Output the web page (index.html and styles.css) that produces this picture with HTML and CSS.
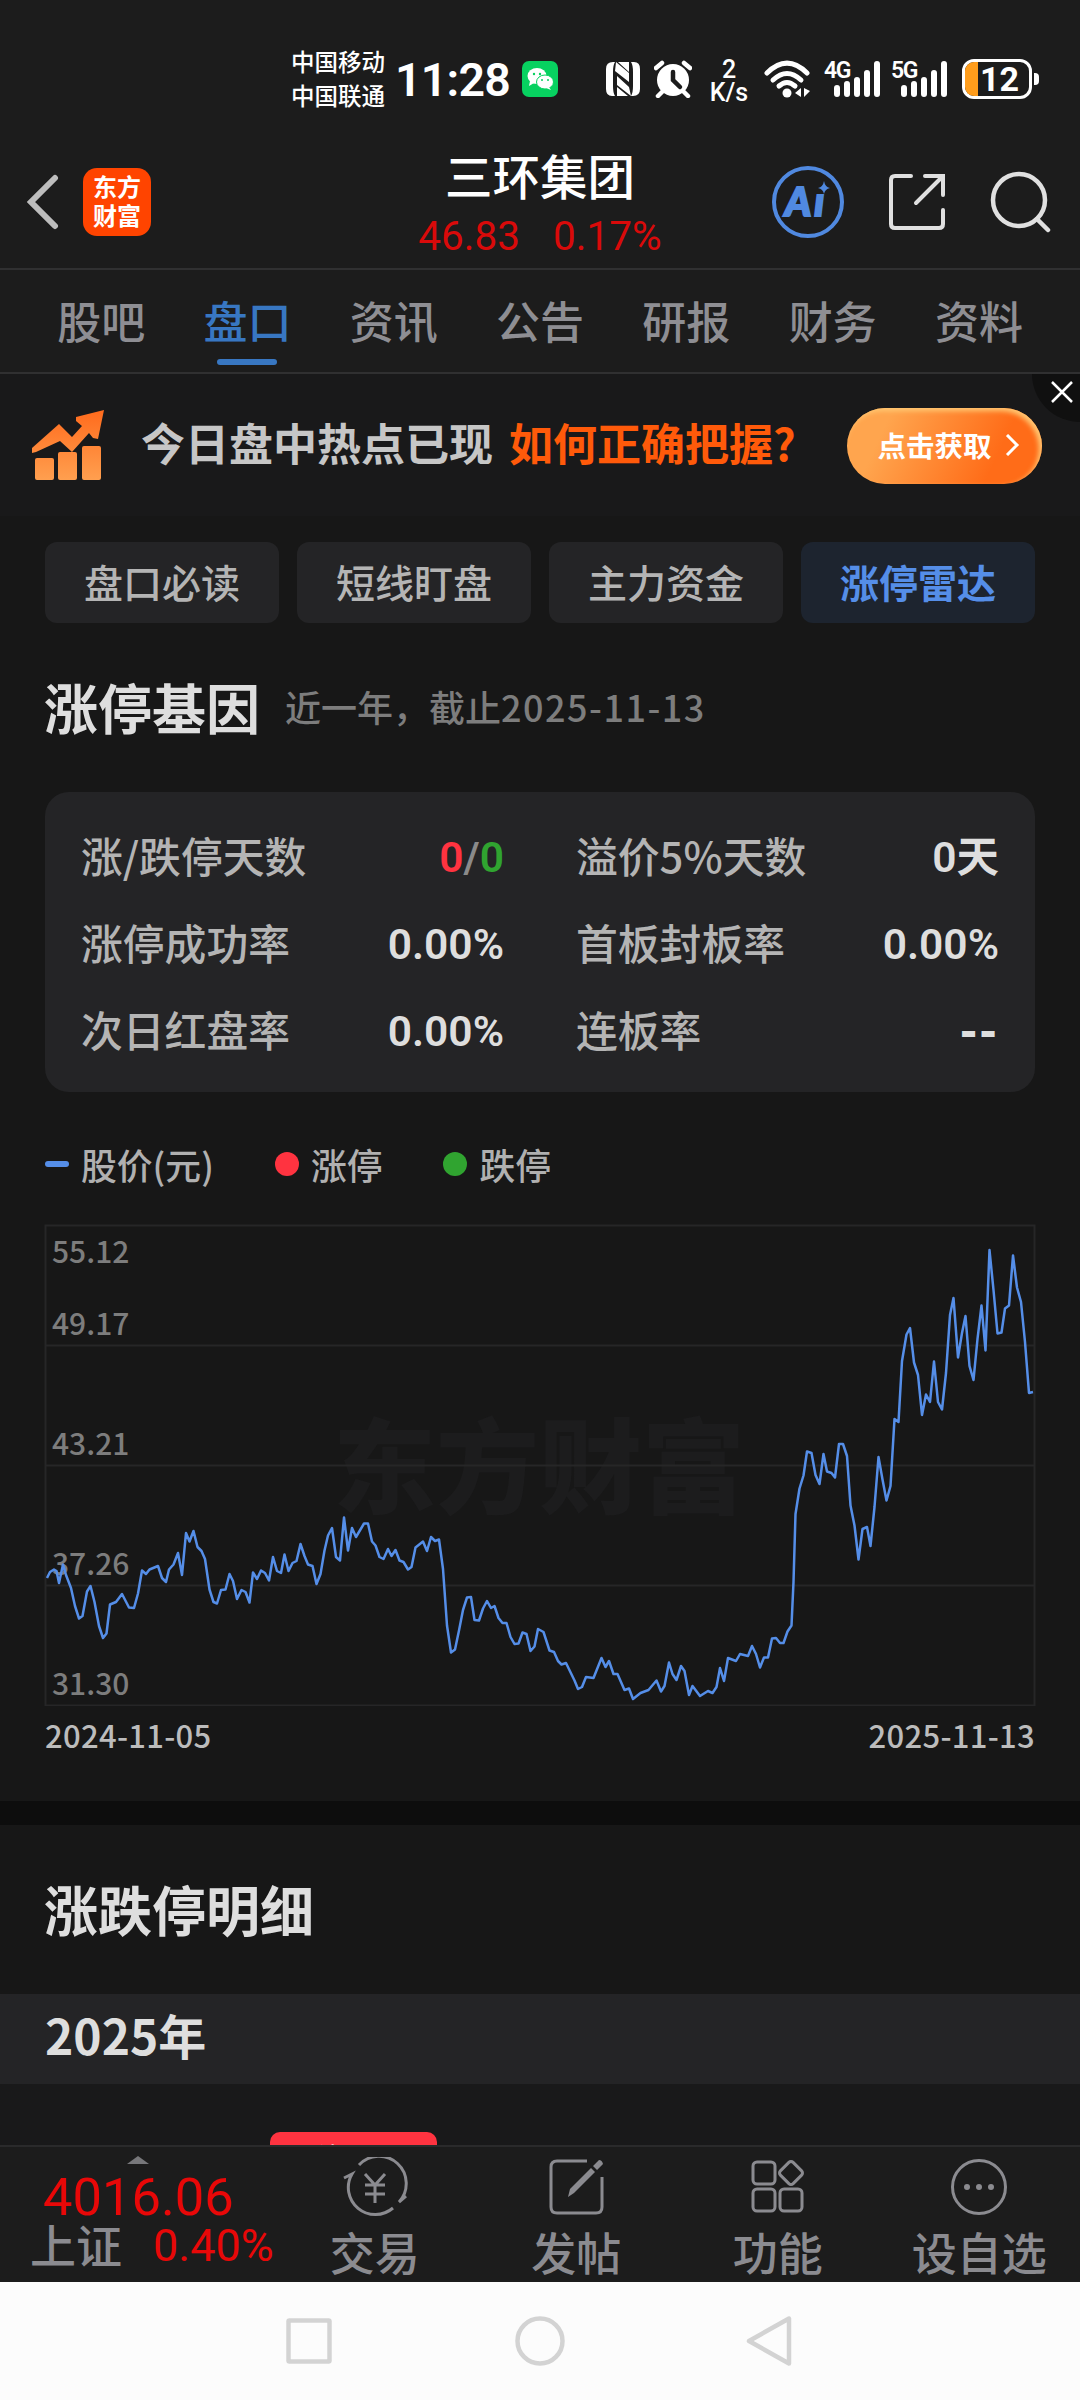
FILE: index.html
```html
<!DOCTYPE html>
<html lang="zh-CN">
<head>
    <meta charset="UTF-8">
    <title>三环集团</title>
    <link rel="stylesheet" href="styles.css">
</head>
<body>
<div class="status">
    <div class="carriers"><span>中国移动</span><span>中国联通</span></div>
    <div class="time">11:28</div>
    <svg class="wechat" width="36" height="36" viewBox="0 0 36 36">
        <rect width="36" height="36" rx="7" fill="#07d160"/>
        <ellipse cx="15" cy="15" rx="9.5" ry="8" fill="#fff"/>
        <path d="M8 20l-1 5 5-3z" fill="#fff"/>
        <ellipse cx="23" cy="21" rx="8.5" ry="7" fill="#fff" stroke="#07d160"/>
        <path d="M27 26l2 3-5-2z" fill="#fff"/>
        <g fill="#07d160"><circle cx="12" cy="13" r="1.2"/><circle cx="18" cy="13" r="1.2"/><circle cx="20" cy="19" r="1"/><circle cx="26" cy="19" r="1"/></g>
    </svg>
    <svg class="nfc" width="34" height="34" viewBox="0 0 34 34">
        <path d="M7 0H9Q7 3 7 10V24Q7 31 9 34H6Q0 34 0 27V7Q0 0 7 0ZM27 34H25Q27 31 27 24V10Q27 3 25 0H28Q34 0 34 7V27Q34 34 27 34Z" fill="#fff"/>
        <path d="M10 0L23 11V20L9 9ZM11 14L23 25L25 34L11 23ZM11 25L22 34H11ZM12 0H23V10Z" fill="#fff"/>
    </svg>
    <svg class="alarm" width="38" height="38" viewBox="0 0 38 38">
        <circle cx="19" cy="20" r="16" fill="#fff"/>
        <path d="M2 8L8 3M36 8L30 3M8 32l-4 4M30 32l4 4" stroke="#fff" stroke-width="4.5" fill="none" stroke-linecap="round"/>
        <path d="M19 12V20L26 27" stroke="#1c1c1c" stroke-width="4.5" fill="none" stroke-linecap="round"/>
    </svg>
    <div class="speed"><span>2</span><span>K/s</span></div>
    <svg class="wifi" width="48" height="38" viewBox="0 0 48 38">
        <g fill="none" stroke="#fff" stroke-width="5" stroke-linecap="round"><path d="M3 13Q23 -7 43 13"/><path d="M9 20Q23 7 37 20"/><path d="M15 26Q23 19 31 26"/></g>
        <circle cx="23" cy="33" r="4.5" fill="#fff"/>
        <path d="M31 33l6-5v9zM40 28v9l6-6z" fill="#fff"/>
    </svg>
    <div class="signal"><span>4G</span>
        <svg width="46" height="38" viewBox="0 0 46 38"><path d="M3 28V34M13 24V34M23 20V34M33 13V34M43 4V34" stroke="#fff" stroke-width="6" stroke-linecap="round"/></svg>
    </div>
    <div class="signal"><span>5G</span>
        <svg width="46" height="38" viewBox="0 0 46 38"><path d="M3 28V34M13 24V34M23 20V34M33 13V34M43 4V34" stroke="#fff" stroke-width="6" stroke-linecap="round"/></svg>
    </div>
    <div class="battery"><i></i><b>12</b></div>
    <div class="nub"></div>
</div>

<div class="header">
    <div class="header-left">
        <svg width="34" height="56" viewBox="0 0 34 56"><path d="M29 4L5 28L29 52" fill="none" stroke="#bdbdbd" stroke-width="6" stroke-linecap="round"/></svg>
        <div class="logo">东方<br>财富</div>
    </div>
    <div class="stock">
        <div class="stock-name">三环集团</div>
        <div class="stock-price"><span>46.83</span><span>0.17%</span></div>
    </div>
    <div class="header-right">
        <div class="ai">
            <svg width="72" height="72" viewBox="0 0 72 72"><circle cx="36" cy="36" r="34" fill="none" stroke="#5089e0" stroke-width="4"/><path d="M52 15q1 6 6 7q-5 1-6 6q-1-5-6-6q5-1 6-7z" fill="#5089e0"/></svg>
            <span>Aı</span>
        </div>
        <svg width="60" height="60" viewBox="0 0 60 60"><path d="M24 4H8Q4 4 4 8V52Q4 56 8 56H52Q56 56 56 52V38M38 4H56V23M55 5L29 31" fill="none" stroke="#e0e0e0" stroke-width="4" stroke-linecap="round"/></svg>
        <svg width="62" height="62" viewBox="0 0 62 62"><circle cx="29" cy="29" r="26" fill="none" stroke="#e0e0e0" stroke-width="4.5"/><path d="M47 48L58 59" stroke="#e0e0e0" stroke-width="4.5" stroke-linecap="round"/></svg>
    </div>
</div>

<div class="tabs">
    <span>股吧</span><span class="on">盘口</span><span>资讯</span><span>公告</span><span>研报</span><span>财务</span><span>资料</span>
</div>

<div class="banner">
    <svg width="74" height="72" viewBox="0 0 74 72">
        <defs><linearGradient id="g" gradientUnits="userSpaceOnUse" x1="0" y1="0" x2="0" y2="72"><stop offset="0" stop-color="#ff6a1c"/><stop offset="1" stop-color="#ffa050"/></linearGradient></defs>
        <path d="M1 39L28 15L41 28L51 17L45 12V8L73 1L67 30L62 29L58 24L41 43L29 32L5 43L1 44Z" fill="url(#g)"/>
        <path d="M4 51q0-2 2-2h15q2 0 2 2v18q0 2-2 2H6q-2 0-2-2zM27 45q0-2 2-2h15q2 0 2 2v24q0 2-2 2H29q-2 0-2-2zM51 39q0-2 2-2h15q2 0 2 2v30q0 2-2 2H53q-2 0-2-2z" fill="url(#g)"/>
    </svg>
    <p>今日盘中热点已现<em>如何正确把握?</em></p>
    <div class="get">点击获取<svg width="16" height="22" viewBox="0 0 16 22"><path d="M3 1L13 11L3 21" fill="none" stroke="#fff" stroke-width="3"/></svg></div>
    <div class="close"><svg width="22" height="22" viewBox="0 0 22 22"><path d="M1 1L21 21M21 1L1 21" stroke="#fff" stroke-width="2.5"/></svg></div>
</div>

<div class="pills">
    <span>盘口必读</span><span>短线盯盘</span><span>主力资金</span><span class="on">涨停雷达</span>
</div>

<div class="title"><h2>涨停基因</h2><small>近一年，截止<span>2025-11-13</span></small></div>

<div class="card">
    <div><span>涨/跌停天数</span><b><i class="red">0</i><i class="gray">/</i><i class="green">0</i></b></div>
    <div><span>溢价5%天数</span><b>0天</b></div>
    <div><span>涨停成功率</span><b>0.00%</b></div>
    <div><span>首板封板率</span><b>0.00%</b></div>
    <div><span>次日红盘率</span><b>0.00%</b></div>
    <div><span>连板率</span><b class="none">--</b></div>
</div>

<div class="legend">
    <span><i class="dash"></i>股价(元)</span>
    <span><i class="dot up"></i>涨停</span>
    <span><i class="dot down"></i>跌停</span>
</div>

<svg class="chart" width="992" height="482" viewBox="-1 -1 992 482">
    <text class="mark" x="288" y="281">东方财富</text>
    <path d="M0.5 0.5H989.5V480.5H0.5ZM0 120.5H990M0 240.5H990M0 360.5H990" fill="none" stroke="#262627" stroke-width="2"/>
    <g class="axis">
        <text x="7" y="38">55.12</text>
        <text x="7" y="110">49.17</text>
        <text x="7" y="230">43.21</text>
        <text x="7" y="350">37.26</text>
        <text x="7" y="470">31.30</text>
    </g>
    <polyline class="price" points="2,353 5,347 9,344.5 11.5,346 14,358 18,339.5 21,350 26,363 30,381 34,393.5 37.5,391 42,366.5 45.5,361 49.5,377 54,401 58,413 61.5,408.5 65,379.5 71,377 77,369 84,382.5 89,383 93,368.5 97,345.5 101,349 104.5,344.5 113,341 117,353 121,357 124,344.5 128.5,339.5 133,328 137,350 141,308 144.5,316.5 148.5,306 152.5,322 156.5,326 160,334 164.5,364.5 168.5,377 172,378.5 176,365 180.5,364.5 184.5,349 188,356 192,374 196.5,365 200.5,367 204.5,377.5 208,347.5 212,354 216,345.5 220,348 224,355.5 228,332 232,346 236,348 239.5,329.5 243.5,346 247.5,338 251.5,336 255.5,319 259.5,331 263,339.5 267.5,341 271.5,359 275.5,349 279.5,325.5 283,310.5 287,303 291,332 295,335.5 299,292.5 303,325.5 307,303 311,312 319,298.5 323,298.5 327,316.5 330.5,320.5 334.5,332 338.5,334 343,324 346.5,331 350.5,325 354.5,335.5 358.5,337 363,344.5 366.5,342 370.5,322.5 378,316.5 382,326 386,312 390,316 394,314.5 398,344 402,400.5 406,427.5 410,424.5 414,405.5 418,385 422,372.5 426,372 429.5,395 434,395.5 438,383.5 442,376 446,383 449.5,381 453.5,393 457.5,398 461.5,398 465.5,412 469.5,419 473.5,418.5 477.5,407.5 481.5,409 485.5,426 489.5,421.5 493,404 498.5,407 504.5,425.5 509,427 513,436 516.5,439.5 521,438 529.5,455.5 533,464 537,462 541,452 548.5,453 556.5,433 560.5,442 564,436 568.5,449 572.5,449 579.5,465 584,463.5 588,474 595.5,468 603.5,465 611.5,455.5 616,466.5 619.5,461 624,437.5 627.5,449 631.5,455 636,441 639.5,446 644,470 647.5,461 655,471 663,466 667.5,468 671.5,462 675,443 679,456 683,433 691,436 695,429 703,431 707,421 711,429 715,442.5 719,432.5 723,432.5 727,413.5 731,413 735,418 738.5,418 742.5,406.5 746.5,400.5 748.5,357 750.5,289 754.5,263.5 758.5,250.5 762,226.5 766.5,228 770.5,250 774.5,259 778.5,229 782,246.5 786.5,248 790,252.5 794,219 798,219 802,231 805.5,280.5 809.5,300.5 813.5,334.5 817.5,304 822,302 825.5,321 829.5,282 833.5,232 837.5,254.5 841.5,275.5 845.5,261 849.5,194 853.5,197 857,136 861.5,109.5 865,103 869,137.5 873,150 877,190 881,169.5 885,177 889,136.5 893,177 897,184.5 901,148 905,90 908.5,73 913,132.5 917,108 920.5,91 924.5,141 928.5,155 932.5,114 936.5,80.5 940.5,125.5 944.5,25 948.5,65 952.5,108.5 956.5,107.5 960,83.5 964,80.5 968,30.5 972,62.5 976,77 980,117 984,168 988,167"/>
</svg>
<div class="dates"><span>2024-11-05</span><span>2025-11-13</span></div>

<div class="split"></div>
<h2 class="detail">涨跌停明细</h2>
<div class="year">2025年</div>
<div class="list"><div class="tag">涨停</div></div>

<div class="bottom">
    <div class="index">
        <i class="caret"></i>
        <div class="point">4016.06</div>
        <div class="rate"><span>上证</span><b>0.40%</b></div>
    </div>
    <div class="item">
        <svg width="66" height="60" viewBox="0 0 66 60">
            <g fill="none" stroke="#8b8b90" stroke-width="3"><path d="M17 8A27 27 0 0 1 57 45L64 39M51 51A27 27 0 0 1 10 17L2 21"/><path d="M23 17L33 28L43 17M33 28V46M23 28H43M23 37H43"/></g>
        </svg>
        <span>交易</span>
    </div>
    <div class="item">
        <svg width="60" height="60" viewBox="0 0 60 60">
            <path d="M41 4H11Q5 4 5 10V50Q5 56 11 56H50Q56 56 56 50V20" fill="none" stroke="#8b8b90" stroke-width="3"/>
            <path d="M22 40L24 32L45 11L49 15L28 36ZM47 9L53 3Q56 3 57 7L51 13Z" fill="#8b8b90"/>
        </svg>
        <span>发帖</span>
    </div>
    <div class="item">
        <svg width="60" height="60" viewBox="0 0 60 60">
            <g fill="none" stroke="#8b8b90" stroke-width="3"><rect x="5" y="5" width="22" height="22" rx="4"/><rect x="5" y="32" width="22" height="22" rx="4"/><rect x="32" y="32" width="22" height="22" rx="4"/><rect x="34" y="7" width="18" height="18" rx="3" transform="rotate(45 43 16)"/></g>
        </svg>
        <span>功能</span>
    </div>
    <div class="item">
        <svg width="60" height="60" viewBox="0 0 60 60"><circle cx="30" cy="30" r="26.5" fill="none" stroke="#8b8b90" stroke-width="3"/><g fill="#8b8b90"><circle cx="18" cy="30" r="3"/><circle cx="30" cy="30" r="3"/><circle cx="42" cy="30" r="3"/></g></svg>
        <span>设自选</span>
    </div>
</div>
<div class="nav">
    <svg width="50" height="50" viewBox="0 0 50 50"><rect x="4.500" y="4.500" width="41" height="41" rx="1"/></svg>
    <svg width="50" height="50" viewBox="0 0 50 50"><circle cx="25" cy="25" r="22.500"/></svg>
    <svg width="50" height="50" viewBox="0 0 50 50"><path d="M43 2.500V47.500L3 25Z"/></svg>
</div>
</body>
</html>
```

FILE: styles.css
```css
* {
    box-sizing: border-box;
}

body {
    margin: 0;
    width: 1080px;
    height: 2400px;
    overflow: hidden;
    background: #171717;
    color: #dedede;
    font-family: "Noto Sans CJK SC", sans-serif;
    font-weight: 500;
    white-space: nowrap;
}

h2, p {
    margin: 0;
}

i, em {
    font-style: normal;
}

svg {
    display: block;
    flex: none;
}

/* status bar */
.status {
    display: flex;
    align-items: center;
    height: 132px;
    padding: 26px 0 0 291px;
    background: #1c1c1c;
    color: #fff;
}

.carriers {
    width: 96px;
    font-size: 23.500px;
    line-height: 34px;
    margin: -2px 8px 0 0;
}

.carriers span {
    display: block;
}

.time {
    width: 114px;
    margin: 2px 13px 0 0;
    font: 600 46.500px/46px Roboto, sans-serif;
    letter-spacing: -0.800px;
}

.nfc {
    margin-left: 48px;
}

.alarm {
    margin-left: 14px;
}

.speed {
    width: 40px;
    margin: 4px 15px 0 17px;
    font: 500 25px/23px Roboto, sans-serif;
    text-align: center;
}

.speed span {
    display: block;
}

.signal {
    position: relative;
    width: 46px;
    margin-left: 22px;
}

.signal + .signal {
    margin-left: 21px;
}

.signal span {
    position: absolute;
    left: -10px;
    top: -1px;
    font: 600 23px/23px Roboto, sans-serif;
    letter-spacing: -1.500px;
}

.battery {
    display: flex;
    width: 70px;
    height: 40px;
    margin-left: 15px;
    border: 3px solid #fff;
    border-radius: 12px;
    overflow: hidden;
}

.battery i {
    width: 13px;
    background: #ff9d1c;
}

.battery b {
    font: 700 34px/35px Roboto, sans-serif;
    margin-left: 2px;
}

.nub {
    width: 5px;
    height: 12px;
    margin-left: 2px;
    border-radius: 0 4px 4px 0;
    background: #fff;
}

/* header */
.header {
    display: grid;
    grid-template-columns: 340px 400px 340px;
    height: 138px;
    background: #1c1c1c;
    border-bottom: 2px solid #303031;
}

.header-left {
    display: flex;
    align-items: center;
    padding: 4px 0 0 26px;
    gap: 23px;
}

.logo {
    width: 68px;
    height: 68px;
    padding-top: 3px;
    border-radius: 14px;
    background: #ff4400;
    color: #fff;
    font-size: 24px;
    font-weight: 700;
    line-height: 29px;
    text-align: center;
}

.stock {
    text-align: center;
}

.stock-name {
    margin-top: 19px;
    font-size: 47.500px;
    line-height: 48px;
    color: #fff;
}

.stock-price {
    display: flex;
    justify-content: center;
    gap: 33px;
    margin-top: 18px;
    font: 40.500px/39px Roboto, sans-serif;
    color: #d90a0a;
}

.header-right {
    display: flex;
    align-items: center;
    padding: 4px 0 0 32px;
    gap: 43px;
}

.ai {
    position: relative;
}

.ai span {
    position: absolute;
    left: 13px;
    top: 15px;
    font: italic 900 40px/40px Lato, sans-serif;
    letter-spacing: 3px;
    -webkit-text-stroke: 2px #5089e0;
    color: #5089e0;
}

.tabs {
    display: grid;
    grid-template-columns: repeat(7, 146.300px);
    height: 104px;
    padding-left: 28px;
    background: #1c1c1c;
    border-bottom: 2px solid #303031;
    font-size: 44px;
    line-height: 100px;
    text-align: center;
    color: #8e8e93;
}

.tabs .on {
    color: #3877c2;
    position: relative;
}

.tabs .on::after {
    content: "";
    position: absolute;
    left: 43px;
    bottom: 7px;
    width: 60px;
    height: 6px;
    border-radius: 3px;
    background: #3877c2;
}

/* ad banner */
.banner {
    display: flex;
    align-items: center;
    position: relative;
    height: 142px;
    padding: 0 38px 0 31px;
    background: #19191a;
}

.banner p {
    margin: -6px 0 0 36px;
    font-size: 44px;
    font-weight: 700;
    color: #c6c6c6;
}

.banner em {
    margin-left: 16px;
    color: #ff5a0a;
}

.get {
    display: flex;
    align-items: center;
    justify-content: center;
    gap: 12px;
    width: 195px;
    height: 76px;
    margin: 2px 0 0 auto;
    padding: 0 0 3px 8px;
    border-radius: 38px;
    background: linear-gradient(115deg, #ffa54e 20%, #ff6c18 75%);
    box-shadow: inset -3px 3px 5px #ffc873;
    color: #fff;
    font-size: 28.500px;
    font-weight: 700;
}

.close {
    position: absolute;
    right: 0;
    top: 0;
    width: 48px;
    height: 48px;
    padding: 7px 0 0 19px;
    border-radius: 0 0 0 48px;
    background: #101010;
}

.pills {
    display: grid;
    grid-template-columns: repeat(4, 234px);
    gap: 18px;
    margin: 26px 0 0 45px;
    font-size: 39px;
    line-height: 78px;
    text-align: center;
    color: #b4b4b4;
}

.pills span {
    height: 81px;
    border-radius: 12px;
    background: #242426;
}

.pills .on {
    background: #1d242f;
    color: #558ee8;
    font-weight: 700;
}

.title {
    display: flex;
    align-items: center;
    height: 80px;
    margin: 43px 0 0 44px;
}

.title h2, .detail {
    font-size: 54px;
    font-weight: 700;
}

.title small {
    margin-left: 25px;
    font-size: 36px;
    color: #7d7d7d;
}

.title small span {
    letter-spacing: 1.500px;
}

.card {
    display: grid;
    grid-template-columns: 423px 423px;
    grid-auto-rows: 87px;
    column-gap: 72px;
    width: 990px;
    height: 300px;
    margin: 46px 0 0 45px;
    padding: 20px 36px;
    border-radius: 24px;
    background: #242426;
    font-size: 41.800px;
    line-height: 87px;
    color: #b4b4b4;
}

.card div {
    display: flex;
    justify-content: space-between;
}

.card b {
    padding-top: 2px;
    font-family: Roboto, "Noto Sans CJK SC", sans-serif;
    font-size: 42.500px;
    font-weight: 600;
    color: #dedede;
}

.card .none {
    font-family: "DejaVu Sans", sans-serif;
    font-weight: 700;
    letter-spacing: 2px;
}

.card .red {
    color: #ff3340;
}

.card .gray {
    color: #8a8a8a;
}

.card .green {
    color: #30a430;
}

.legend {
    display: flex;
    gap: 61px;
    margin: 45px 0 0 45px;
    height: 54px;
    font-size: 35.800px;
    line-height: 54px;
    color: #b0b0b0;
}

.legend span {
    display: flex;
    align-items: center;
}

.dash, .dot {
    width: 24px;
    height: 24px;
    margin-right: 12px;
    border-radius: 50%;
}

.dash {
    height: 6px;
    border-radius: 3px;
    background: #558ee8;
}

.up {
    background: #ff3340;
}

.down {
    background: #30a430;
}

/* price chart */
.chart {
    margin: 33px 0 0 44px;
}

.mark {
    font-size: 103px;
    font-weight: 900;
    fill: #1c1c1d;
}

.axis {
    font-size: 30px;
    fill: #7d7d7d;
}

.price {
    fill: none;
    stroke: #558ee8;
    stroke-width: 2.500;
    stroke-linejoin: round;
}

.dates {
    display: flex;
    justify-content: space-between;
    height: 95px;
    margin: 0 45px;
    font-size: 31px;
    line-height: 58px;
    letter-spacing: 0.300px;
    color: #bcbcbc;
}

.split {
    height: 24px;
    background: #0d0d0d;
}

.detail {
    height: 169px;
    padding-left: 44px;
    line-height: 167px;
}

.year {
    height: 90px;
    padding-left: 45px;
    background: #242426;
    font-size: 48px;
    font-weight: 700;
    line-height: 81px;
}

.list {
    height: 61px;
    padding: 48px 0 0 270px;
    background: #19191a;
    overflow: hidden;
}

.tag {
    width: 167px;
    height: 50px;
    padding-left: 14px;
    border-radius: 10px;
    background: #ff3340;
    color: #fff;
    font-size: 30px;
    line-height: 50px;
}

/* bottom bar */
.bottom {
    display: grid;
    grid-template-columns: 274px repeat(4, 201.500px);
    height: 137px;
    background: #1c1c1c;
    border-top: 2px solid #2a2a2b;
    color: #8b8b90;
}

.caret {
    display: block;
    width: 22px;
    height: 8px;
    margin: 9px 0 0 127px;
    background: #77777a;
    clip-path: polygon(50% 0, 100% 100%, 0 100%);
}

.point {
    margin: 7px 0 0 43px;
    font: 52.500px/52px Roboto, sans-serif;
    color: #e80808;
}

.rate {
    display: flex;
    align-items: center;
    margin: -2px 0 0 30px;
    height: 46px;
    font-size: 46px;
    line-height: 46px;
}

.rate span {
    margin-top: -3px;
}

.rate b {
    margin: 4px 0 0 31px;
    font: 45px/44px Roboto, sans-serif;
    color: #e80808;
}

.item {
    display: flex;
    flex-direction: column;
    align-items: center;
    padding-top: 10px;
    font-size: 45px;
    line-height: 70px;
}

.nav {
    display: flex;
    justify-content: center;
    align-items: center;
    gap: 181px;
    height: 118px;
    background: #fcfcfc;
}

.nav svg {
    fill: none;
    stroke: #d3d3d3;
    stroke-width: 4.500;
    stroke-linejoin: round;
}
```
